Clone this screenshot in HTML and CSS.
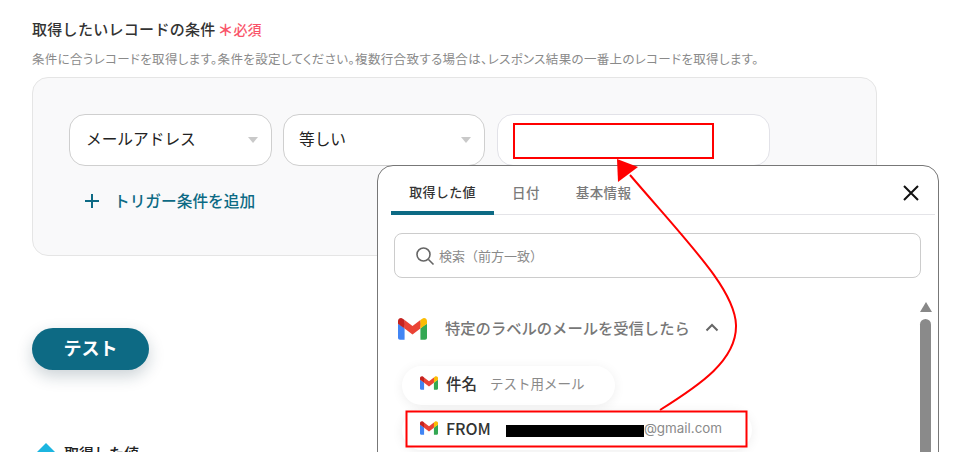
FILE: index.html
```html
<!DOCTYPE html>
<html lang="ja">
<head>
<meta charset="utf-8">
<title>取得したいレコードの条件</title>
<link rel="stylesheet" href="styles.css">
</head>
<body>
<svg class="defs" width="0" height="0" aria-hidden="true">
  <symbol id="gmail" viewBox="0 0 256 193">
    <path fill="#4285F4" d="M58.182 192.05V93.14L27.507 65.077 0 49.504v125.091c0 9.658 7.825 17.455 17.455 17.455h40.727Z"/>
    <path fill="#34A853" d="M197.818 192.05h40.727c9.659 0 17.455-7.826 17.455-17.455V49.505l-31.156 17.837-27.026 25.798v98.91Z"/>
    <path fill="#EA4335" d="m58.182 93.14-4.174-38.647 4.174-36.989L128 69.868l69.818-52.364 4.669 34.992-4.669 40.644L128 145.504z"/>
    <path fill="#FBBC04" d="M197.818 17.504V93.14L256 49.504V26.231c0-21.585-24.64-33.89-41.89-20.945l-16.292 12.218Z"/>
    <path fill="#C5221F" d="m0 49.504 26.759 20.07L58.182 93.14V17.504L41.89 5.286C24.61-7.66 0 4.646 0 26.23v23.273Z"/>
  </symbol>
</svg>
<main class="page">
  <h2 class="title"><span>取得したいレコードの条件</span><span class="req"><span class="star">＊</span><span>必須</span></span></h2>
  <p class="desc">条件に合うレコードを取得します。条件を設定してください。複数行合致する場合は、レスポンス結果の一番上のレコードを取得します。</p>
  <section class="panel">
    <div class="row">
      <div class="field f1"><span>メールアドレス</span><i class="caret"></i></div>
      <div class="field f2"><span>等しい</span><i class="caret"></i></div>
      <div class="field f3"></div>
    </div>
    <div class="add">
      <svg class="plus" width="16" height="16" viewBox="0 0 16 16"><path d="M8 1v14M1 8h14" stroke="#0d6a84" stroke-width="2" fill="none"/></svg>
      <span>トリガー条件を追加</span>
    </div>
  </section>
  <button class="test">テスト</button>
  <div class="result"><i class="diamond"></i><span>取得した値</span></div>
</main>

<aside class="popup">
  <div class="tabs">
    <div class="tab active">取得した値</div>
    <div class="tab">日付</div>
    <div class="tab">基本情報</div>
    <svg class="close" width="18" height="18" viewBox="0 0 18 18"><path d="M2 2l14 14M16 2L2 16" stroke="#111" stroke-width="2" fill="none"/></svg>
  </div>
  <div class="search">
    <svg width="20" height="20" viewBox="0 0 20 20" fill="none" stroke="#666" stroke-width="1.6"><circle cx="8.5" cy="8.5" r="6.5"/><path d="M13.5 13.5l5 5"/></svg>
    <span>検索（前方一致）</span>
  </div>
  <div class="group">
    <svg class="g-big"><use href="#gmail"/></svg>
    <span class="g-title">特定のラベルのメールを受信したら</span>
    <svg class="chev" width="14" height="9" viewBox="0 0 14 9"><path d="M1.5 7.5L7 2l5.5 5.5" stroke="#666" stroke-width="2" fill="none"/></svg>
  </div>
  <div class="pill p1"><svg class="g-small"><use href="#gmail"/></svg><b>件名</b><span>テスト用メール</span></div>
  <div class="pill p2"><svg class="g-small"><use href="#gmail"/></svg><b>FROM</b><span class="mail"><i class="mask"></i>@gmail.com</span></div>
  <div class="scrollbar"><i class="up"></i><i class="thumb"></i></div>
</aside>

<svg class="marks" width="957" height="452" viewBox="0 0 957 452" fill="none">
  <rect x="514" y="124" width="199" height="34" stroke="#f00" stroke-width="2"/>
  <rect x="406.5" y="411.5" width="340" height="35" stroke="#f00" stroke-width="2"/>
  <path d="M660 410C700 385 737 360 736 325C735 290 690 245 630 175" stroke="#f00" stroke-width="2"/>
  <path d="M617 159L638 167L618 182Z" fill="#f00"/>
</svg>
</body>
</html>
```
FILE: styles.css
```css
* { box-sizing: border-box; }
html, body { margin: 0; height: 452px; overflow: hidden; background: #fff; }
body { position: relative; font-family: "Noto Sans CJK JP", "Noto Sans", sans-serif; color: #333; }
.defs { position: absolute; }
.page { padding: 18px 0 0 32px; width: 957px; }
.title { display: flex; align-items: center; margin: 0; font-size: 15px; line-height: 22px; font-weight: 500; color: #333; letter-spacing: .3px; }
.req { display: flex; align-items: center; color: #f9546a; font-size: 14px; font-weight: 500; letter-spacing: 0; margin-left: 2px; }
.star { font-size: 16px; font-weight: 700; width: 16px; }
.desc { margin: 10px 0 0; font-size: 12.5px; font-feature-settings: "palt"; letter-spacing: .35px; line-height: 18px; color: #8a8a8a; white-space: nowrap; }
.panel { margin-top: 9px; width: 845px; height: 179px; background: #f9f9fa; border: 1px solid #e5e5e5; border-radius: 16px; padding: 36px; }
.row { display: flex; gap: 11px; }
.field { height: 52px; background: #fff; border: 1px solid #cfcfcf; border-radius: 16px; display: flex; align-items: center; justify-content: space-between; padding: 0 13px 4px 16px; font-size: 15.7px; color: #222; }
.f1 { width: 203px; }
.f2 { width: 202px; padding-left: 15px; }
.f3 { width: 273px; margin-left: 1px; border-color: #e2e2e8; }
.caret { width: 0; height: 0; margin-top: 4px; border: 5.5px solid transparent; border-top: 6px solid #c9c9c9; border-bottom: 0; }
.add { display: flex; align-items: center; gap: 14px; margin: 24px 0 0 15px; font-size: 15.7px; font-weight: 500; color: #0d6a84; line-height: 22px; }
.test { display: block; margin-top: 72px; padding: 0 0 5px; width: 117px; height: 42px; border: 0; border-radius: 21px; background: #0d6a84; color: #fff; font: 700 18px "Noto Sans CJK JP", sans-serif; box-shadow: 0 6px 16px rgba(20, 50, 70, .22); }
.result { display: flex; gap: 7px; margin: 73px 0 0 3px; font-size: 15px; line-height: 20px; font-weight: 500; color: #222; }
.diamond { width: 22px; height: 22px; background: #1cb5e0; clip-path: polygon(50% 0, 100% 50%, 50% 100%, 0 50%); }

.popup { position: absolute; left: 377px; top: 165px; width: 562px; height: 320px; background: #fff; border: 1px solid #777; border-radius: 16px; }
.tabs { display: flex; height: 49px; margin: 0 3px 0 13px; position: relative; border-bottom: 1px solid #e4e4e8; }
.tab { padding: 0 18px; line-height: 52px; font-size: 13.5px; font-weight: 500; color: #7a7a7a; letter-spacing: .4px; white-space: nowrap; }
.tab.active { width: 103px; color: #333; border-bottom: 4px solid #0d6a84; border-radius: 3px 3px 0 0; height: 49px; text-align: center; padding: 0; font-size: 13px; letter-spacing: .3px; }
.close { position: absolute; right: 15px; top: 18px; }
.search { display: flex; align-items: center; gap: 4px; height: 45px; margin: 18px 17px 0 16px; padding-left: 20px; border: 1px solid #ccc; border-radius: 8px; font-size: 13px; color: #8a8a8a; }
.group { display: flex; align-items: center; margin: 37px 0 0 20px; height: 24px; }
.g-big { width: 29px; height: 22px; margin-top: 4px; }
.g-title { margin-left: 18px; font-size: 15.3px; font-weight: 500; color: #777; }
.chev { margin-left: 15px; }
.pill { display: flex; align-items: center; background: #fff; border-radius: 20px; box-shadow: 0 2px 12px rgba(0, 0, 0, .07); white-space: nowrap; }
.pill b { font-weight: 500; color: #333; font-size: 15.5px; margin-left: 8px; }
.pill span { font-size: 13.5px; color: #8a8a8a; }
.g-small { width: 18px; height: 14px; }
.p1 { width: 213px; height: 39px; margin: 27px 0 0 24px; padding: 0 0 6px 18px; }
.p1 span { margin-left: 13px; }
.p2 { width: 350px; height: 40px; margin: 5px 0 0 24px; padding: 0 0 5px 18px; }
.p2 b { font-size: 16px; }
.mail { display: flex; align-items: center; margin-left: 15px; color: #888; font-family: "Inter", sans-serif; }
.pill .mail { font-size: 13.4px; }
.mask { width: 138px; height: 12px; margin-top: 6px; background: #000; }
.scrollbar { position: absolute; left: 541px; top: 136px; width: 13px; display: flex; flex-direction: column; align-items: center; gap: 7px; }
.up { width: 0; height: 0; border: 6.5px solid transparent; border-bottom: 10px solid #888; border-top: 0; }
.thumb { width: 11px; height: 200px; background: #8a8a8a; border-radius: 6px; }
.marks { position: absolute; left: 0; top: 0; pointer-events: none; }
```
